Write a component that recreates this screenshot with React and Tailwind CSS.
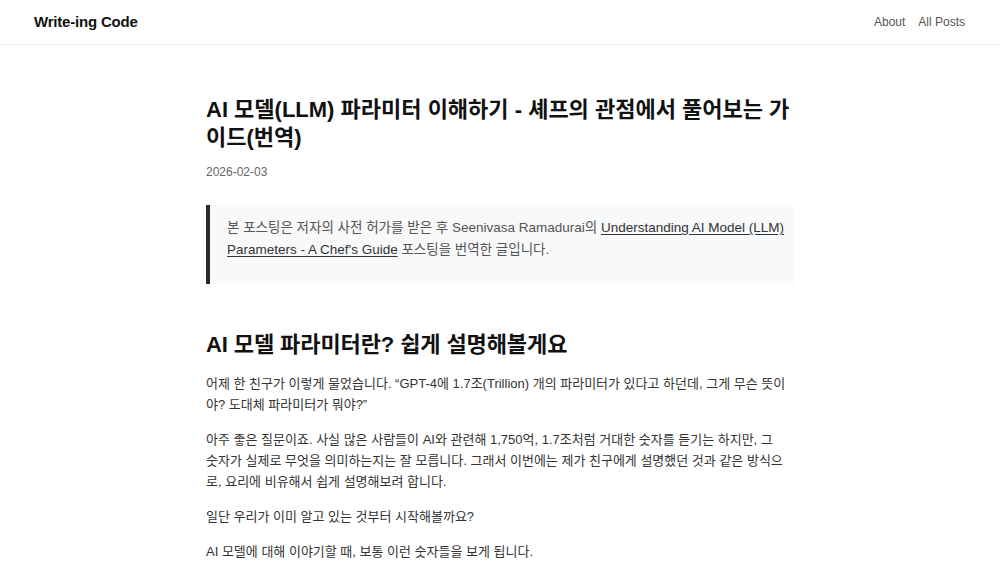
const FONT = "font-['Liberation_Sans','Noto_Sans_CJK_KR',sans-serif]"

function Header() {
  return (
    <header className="flex h-[45px] items-center justify-between border-b border-[#eeeeee] pl-[34px] pr-[35px]">
      <a href="#" className="text-[15px] font-bold tracking-[-0.2px] text-[#111]">Write-ing Code</a>
      <nav className="flex gap-[13px] text-[12px] text-[#555]">
        <a href="#">About</a>
        <a href="#">All Posts</a>
      </nav>
    </header>
  )
}

export default function App() {
  return (
    <div className={`min-h-screen bg-white ${FONT}`}>
      <Header />
      <main className="mx-auto w-[588px] pt-[51px]">
        <h1 className="text-[22px] font-bold leading-[28px] text-[#111]">
          AI 모델(LLM) 파라미터 이해하기 - 셰프의 관점에서 풀어보는 가<br />이드(번역)
        </h1>
        <div className="mt-[11px] text-[12px] leading-[18px] text-[#666]">2026-02-03</div>

        <blockquote className="mt-[24px] border-l-4 border-[#2b2b2b] bg-[#f8f9fa] pb-[23px] pl-[17px] pr-[6px] pt-[12px] text-[13.5px] leading-[22px] text-[#555]">
          본 포스팅은 저자의 사전 허가를 받은 후 Seenivasa Ramadurai의{' '}
          <a href="#" className="text-[#333] underline underline-offset-2">Understanding AI Model (LLM)<br />Parameters - A Chef's Guide</a>{' '}
          포스팅을 번역한 글입니다.
        </blockquote>

        <h2 className="mt-[47px] text-[22px] font-bold leading-[28px] tracking-[-0.1px] text-[#111]">
          AI 모델 파라미터란? 쉽게 설명해볼게요
        </h2>

        <div className="mt-[14px] space-y-[14px] text-[13px] leading-[21px] text-[#333]">
          <p>
            어제 한 친구가 이렇게 물었습니다. “GPT-4에 1.7조(Trillion) 개의 파라미터가 있다고 하던데, 그게 무슨 뜻이<br />
            야? 도대체 파라미터가 뭐야?”
          </p>
          <p>
            아주 좋은 질문이죠. 사실 많은 사람들이 AI와 관련해 1,750억, 1.7조처럼 거대한 숫자를 듣기는 하지만, 그<br />
            숫자가 실제로 무엇을 의미하는지는 잘 모릅니다. 그래서 이번에는 제가 친구에게 설명했던 것과 같은 방식으<br />
            로, 요리에 비유해서 쉽게 설명해보려 합니다.
          </p>
          <p>일단 우리가 이미 알고 있는 것부터 시작해볼까요?</p>
          <p>AI 모델에 대해 이야기할 때, 보통 이런 숫자들을 보게 됩니다.</p>
        </div>
      </main>
    </div>
  )
}
